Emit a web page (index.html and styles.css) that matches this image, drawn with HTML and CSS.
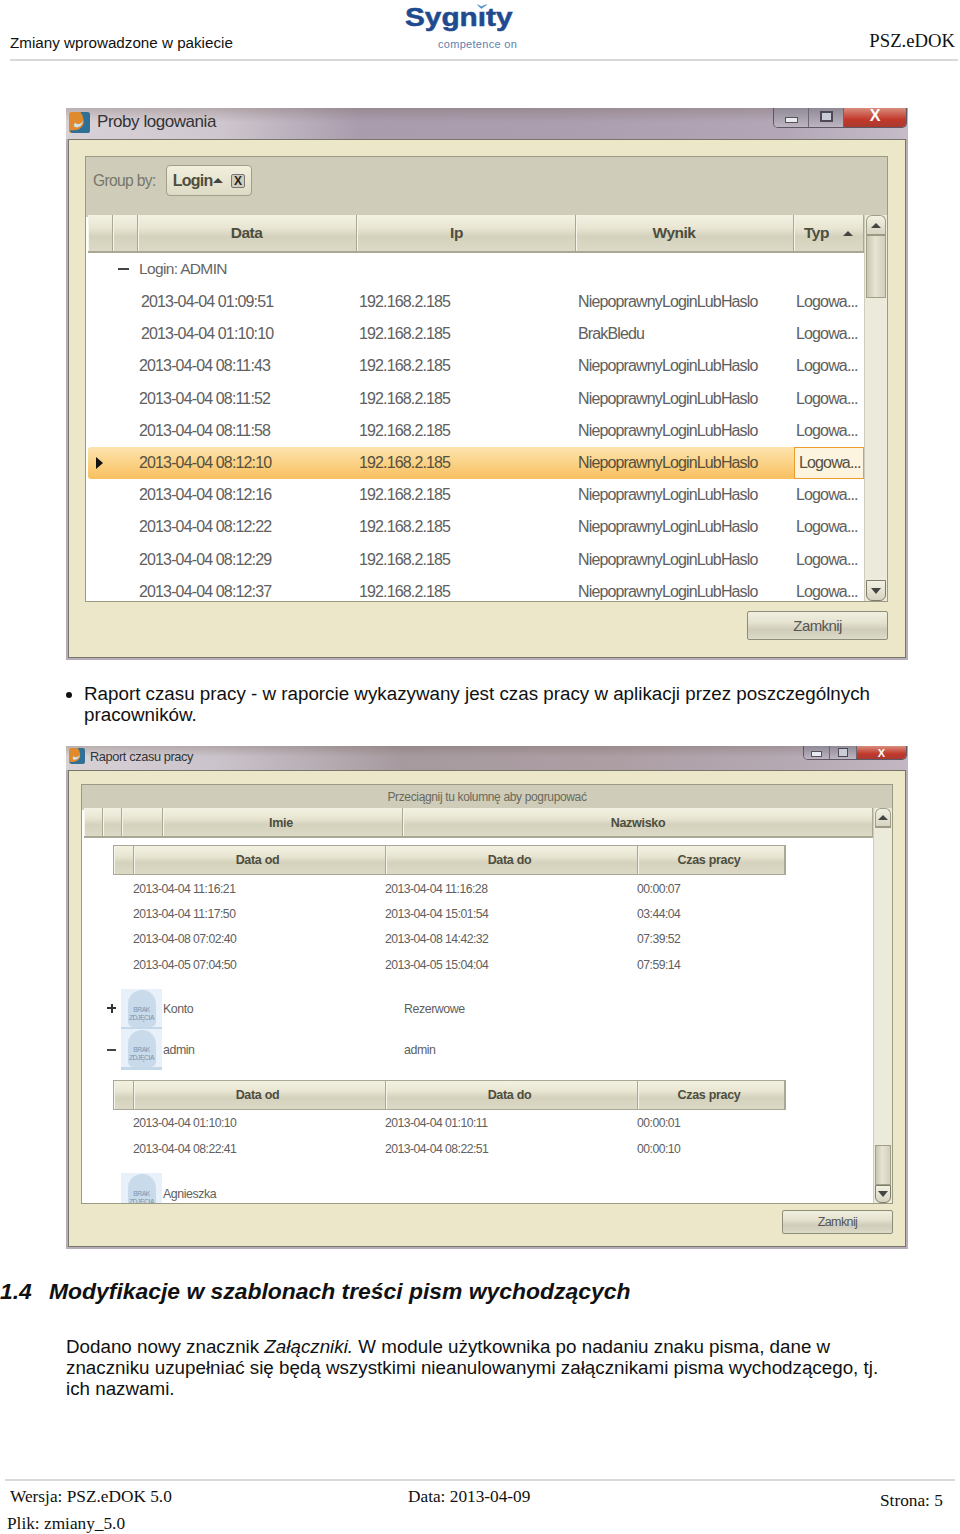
FILE: index.html
```html
<!DOCTYPE html>
<html lang="pl">
  <head>
    <meta charset="UTF-8" />
    <title>Zmiany wprowadzone w pakiecie</title>
    <link rel="stylesheet" href="styles.css">
  </head>
  <body>
    <header class="page-head">
      <span class="head-left">Zmiany wprowadzone w pakiecie</span>
      <div class="logo">
        <span class="logo-name">Sygnity</span>
        <svg class="logo-tick" viewBox="0 0 14 8"><rect width="14" height="8" fill="#fff"/><path d="M1 1l5 5 7-5-7 2.5z" fill="#4f8fc4" stroke="#4f8fc4"/></svg>
        <span class="logo-sub">competence on</span>
      </div>
      <span class="head-right">PSZ.eDOK</span>
    </header>

    <section class="win win-one">
      <div class="titlebar">
        <svg class="app-icon" viewBox="0 0 22 22"><rect width="22" height="22" rx="3" fill="#e08a2e"/><path d="M12 0h7a3 3 0 0 1 3 3v16a3 3 0 0 1-3 3H4c-2 0-3-2-3-3 8 1 12-2 14-6 1-4 0-9-3-13z" fill="#2f7196"/><path d="M6 11c3 3 7 2 9-2-1 6-6 9-10 6z" fill="#cfe2ee"/></svg>
        <span class="win-title">Proby logowania</span>
        <div class="win-btns">
          <span class="wb"><i class="wb-min"></i></span>
          <span class="wb"><i class="wb-max"></i></span>
          <span class="wb wb-close">X</span>
        </div>
      </div>
      <div class="win-body">
        <div class="panel">
          <div class="groupby">
            <span class="groupby-label">Group by:</span>
            <span class="chip">Login<i class="tri-up"></i><b class="chip-x">X</b></span>
          </div>
          <div class="grid-wrap">
            <div class="grid-main">
              <div class="hdr cols-one">
                <span></span><span></span><span>Data</span><span class="hdr-ip">Ip</span><span class="hdr-wynik">Wynik</span>
                <span class="hdr-typ">Typ<i class="tri-up"></i></span>
              </div>
              <div class="group-row"><i class="minus"></i>Login: ADMIN</div>
              <div class="row shift"><span>2013-04-04 01:09:51</span><span>192.168.2.185</span><span>NiepoprawnyLoginLubHaslo</span><span>Logowa...</span></div>
              <div class="row shift"><span>2013-04-04 01:10:10</span><span>192.168.2.185</span><span>BrakBledu</span><span>Logowa...</span></div>
              <div class="row"><span>2013-04-04 08:11:43</span><span>192.168.2.185</span><span>NiepoprawnyLoginLubHaslo</span><span>Logowa...</span></div>
              <div class="row"><span>2013-04-04 08:11:52</span><span>192.168.2.185</span><span>NiepoprawnyLoginLubHaslo</span><span>Logowa...</span></div>
              <div class="row"><span>2013-04-04 08:11:58</span><span>192.168.2.185</span><span>NiepoprawnyLoginLubHaslo</span><span>Logowa...</span></div>
              <div class="row selected"><i class="tri-right"></i><span>2013-04-04 08:12:10</span><span>192.168.2.185</span><span>NiepoprawnyLoginLubHaslo</span><span class="cell-focus">Logowa...</span></div>
              <div class="row"><span>2013-04-04 08:12:16</span><span>192.168.2.185</span><span>NiepoprawnyLoginLubHaslo</span><span>Logowa...</span></div>
              <div class="row"><span>2013-04-04 08:12:22</span><span>192.168.2.185</span><span>NiepoprawnyLoginLubHaslo</span><span>Logowa...</span></div>
              <div class="row"><span>2013-04-04 08:12:29</span><span>192.168.2.185</span><span>NiepoprawnyLoginLubHaslo</span><span>Logowa...</span></div>
              <div class="row"><span>2013-04-04 08:12:37</span><span>192.168.2.185</span><span>NiepoprawnyLoginLubHaslo</span><span>Logowa...</span></div>
            </div>
            <div class="scroll scroll-one">
              <span class="sb-btn sb-up"><i class="tri-up"></i></span>
              <span class="sb-thumb"></span>
              <span class="sb-btn sb-down"><i class="tri-down"></i></span>
            </div>
          </div>
        </div>
        <div class="win-foot"><span class="btn">Zamknij</span></div>
      </div>
    </section>

    <ul class="bullets">
      <li>Raport czasu pracy - w raporcie wykazywany jest czas pracy w aplikacji przez poszczególnych pracowników.</li>
    </ul>

    <section class="win win-two">
      <div class="titlebar">
        <svg class="app-icon" viewBox="0 0 22 22"><rect width="22" height="22" rx="3" fill="#e08a2e"/><path d="M12 0h7a3 3 0 0 1 3 3v16a3 3 0 0 1-3 3H4c-2 0-3-2-3-3 8 1 12-2 14-6 1-4 0-9-3-13z" fill="#2f7196"/><path d="M6 11c3 3 7 2 9-2-1 6-6 9-10 6z" fill="#cfe2ee"/></svg>
        <span class="win-title">Raport czasu pracy</span>
        <div class="win-btns">
          <span class="wb"><i class="wb-min"></i></span>
          <span class="wb"><i class="wb-max"></i></span>
          <span class="wb wb-close">X</span>
        </div>
      </div>
      <div class="win-body">
        <div class="panel">
          <div class="drag-hint">Przeciągnij tu kolumnę aby pogrupować</div>
          <div class="grid-wrap">
            <div class="grid-main">
              <div class="hdr cols-two">
                <span></span><span></span><span></span><span>Imie</span><span>Nazwisko</span>
              </div>
              <div class="sub">
                <div class="hdr cols-sub"><span></span><span>Data od</span><span>Data do</span><span>Czas pracy</span></div>
                <div class="sub-row"><span>2013-04-04 11:16:21</span><span>2013-04-04 11:16:28</span><span>00:00:07</span></div>
                <div class="sub-row"><span>2013-04-04 11:17:50</span><span>2013-04-04 15:01:54</span><span>03:44:04</span></div>
                <div class="sub-row"><span>2013-04-08 07:02:40</span><span>2013-04-08 14:42:32</span><span>07:39:52</span></div>
                <div class="sub-row"><span>2013-04-05 07:04:50</span><span>2013-04-05 15:04:04</span><span>07:59:14</span></div>
              </div>
              <div class="person first">
                <i class="plus"></i>
                <div class="avatar"><span>BRAK<br>ZDJĘCIA</span></div>
                <span>Konto</span><span>Rezerwowe</span>
              </div>
              <div class="person">
                <i class="minus"></i>
                <div class="avatar"><span>BRAK<br>ZDJĘCIA</span></div>
                <span>admin</span><span>admin</span>
              </div>
              <div class="sub sub-two">
                <div class="hdr cols-sub"><span></span><span>Data od</span><span>Data do</span><span>Czas pracy</span></div>
                <div class="sub-row"><span>2013-04-04 01:10:10</span><span>2013-04-04 01:10:11</span><span>00:00:01</span></div>
                <div class="sub-row"><span>2013-04-04 08:22:41</span><span>2013-04-04 08:22:51</span><span>00:00:10</span></div>
              </div>
              <div class="person last">
                <i class="plus"></i>
                <div class="avatar"><span>BRAK<br>ZDJĘCIA</span></div>
                <span>Agnieszka</span><span></span>
              </div>
            </div>
            <div class="scroll scroll-two">
              <span class="sb-btn sb-up"><i class="tri-up"></i></span>
              <span class="sb-thumb"></span>
              <span class="sb-btn sb-down"><i class="tri-down"></i></span>
            </div>
          </div>
        </div>
        <div class="win-foot"><span class="btn">Zamknij</span></div>
      </div>
    </section>

    <h2 class="sec-title"><span class="sec-num">1.4</span>Modyfikacje w szablonach treści pism wychodzących</h2>
    <p class="sec-text">Dodano nowy znacznik <em>Załączniki.</em> W module użytkownika po nadaniu znaku pisma, dane w znaczniku uzupełniać się będą wszystkimi nieanulowanymi załącznikami pisma wychodzącego, tj. ich nazwami.</p>

    <footer class="page-foot">
      <div class="foot-line">
        <span class="foot-ver">Wersja: PSZ.eDOK 5.0</span>
        <span>Data: 2013-04-09</span>
        <span class="foot-page">Strona: 5</span>
      </div>
      <div class="foot-file">Plik: zmiany_5.0</div>
    </footer>
  </body>
</html>
```
FILE: styles.css
```css
* {
  box-sizing: border-box;
}
html,
body {
  margin: 0;
  background: #fff;
}
body {
  width: 960px;
  height: 1534px;
  overflow: hidden;
  font-family: "Liberation Sans", Arial, sans-serif;
  color: #111;
}
i {
  display: block;
}

/* page header */
.page-head {
  display: grid;
  grid-template-columns: 395px 1fr auto;
  align-items: end;
  height: 61px;
  margin-left: 10px;
  margin-right: 2px;
  padding: 0 3px 8px 0;
  border-bottom: 2px solid #d9d9d9;
}
.head-left {
  font-size: 15.2px;
  line-height: 17px;
}
.head-right {
  font-family: "Liberation Serif", serif;
  font-size: 18.7px;
  line-height: 20px;
}
.logo {
  position: relative;
  display: flex;
  flex-direction: column;
  margin-bottom: 1px;
}
.logo-name {
  font-size: 25px;
  line-height: 26px;
  font-weight: bold;
  -webkit-text-stroke: 0.5px #1f4a8f;
  color: #1f4a8f;
  transform: scaleX(1.19);
  transform-origin: left;
}
.logo-tick {
  position: absolute;
  left: 71px;
  top: 0;
  width: 12px;
  height: 6px;
}
.logo-sub {
  margin-left: 33px;
  margin-top: 9px;
  font-size: 11px;
  line-height: 11px;
  letter-spacing: 0.3px;
  color: #5f7fae;
}

/* window chrome */
.win {
  display: flex;
  flex-direction: column;
  width: 842px;
  margin-left: 66px;
  padding: 0 2px 2px;
  background: #b8aeba;
  color: #555;
}
.win-one {
  height: 552px;
  margin-top: 47px;
}
.win-two {
  height: 503px;
}
.titlebar {
  display: flex;
  align-items: center;
  flex: none;
  height: 31px;
  margin: 0 -2px;
  padding-left: 3px;
  padding-bottom: 3px;
  background:
    linear-gradient(rgba(110, 90, 80, 0.28), rgba(110, 90, 80, 0) 45%),
    linear-gradient(90deg, #d8d2d8 0, #cfc7cf 18%, #a99cad 35%, #ab9eae 60%, #b3a7b7 85%, #c5bcc8 100%);
}
.win-two .titlebar {
  height: 24px;
  padding-bottom: 4px;
  background:
    linear-gradient(rgba(110, 90, 80, 0.28), rgba(110, 90, 80, 0) 45%),
    linear-gradient(90deg, #d8d2d6 0, #cbc3cb 18%, #a69a9f 40%, #ad9ea4 65%, #b4a8b2 85%, #c2b7c2 100%);
}
.app-icon {
  width: 21px;
  height: 21px;
  flex: none;
}
.win-two .app-icon {
  width: 16px;
  height: 16px;
}
.win-title {
  margin-left: 7px;
  font-size: 17px;
  letter-spacing: -0.45px;
  color: #333;
}
.win-two .win-title {
  margin-left: 5px;
  font-size: 12.8px;
  letter-spacing: -0.4px;
}
.win-btns {
  display: flex;
  align-self: flex-start;
  margin-left: auto;
  margin-right: 1px;
  height: 20px;
  border: 1px solid #5f5864;
  border-top: none;
  border-radius: 0 0 5px 5px;
  overflow: hidden;
}
.wb {
  display: flex;
  align-items: center;
  justify-content: center;
  width: 35px;
  background: linear-gradient(#8f8a96, #bdb5c1);
  border-right: 1px solid #6d6572;
}
.wb-close {
  width: 62px;
  border: none;
  background: linear-gradient(#d98d7c, #c2392c 60%, #a83a30);
  color: #fff;
  font-weight: bold;
  font-size: 16px;
  line-height: 14px;
  padding-bottom: 4px;
}
.wb-min {
  width: 13px;
  height: 6px;
  border: 1px solid #555;
  background: #e9ebf2;
  margin-top: 5px;
}
.wb-max {
  width: 13px;
  height: 11px;
  margin-bottom: 3px;
  border: 2px solid #4e4a55;
  background: #c9cbd6;
}
.win-two .win-btns {
  width: 104px;
  height: 14px;
}
.win-two .wb {
  width: 27px;
}
.win-two .wb-close {
  width: 50px;
  font-size: 11px;
  line-height: 12px;
  padding-bottom: 0;
}
.win-two .wb-min {
  width: 11px;
  height: 6px;
  margin-top: 2px;
}
.win-two .wb-max {
  width: 10px;
  height: 9px;
  margin-bottom: 0;
  border-width: 1px;
}
.win-body {
  flex: 1;
  display: flex;
  flex-direction: column;
  min-height: 0;
  background: #ece7c9;
  border: 1px solid #77766a;
}
.win-one .win-body {
  padding: 16px 17px 0 16px;
}
.win-two .win-body {
  padding: 13px 12px 0 12px;
}
.panel {
  display: flex;
  flex-direction: column;
  border: 1px solid #9b9a82;
  background: #cfcdb9;
}
.win-one .panel {
  height: 446px;
}
.win-two .panel {
  height: 420px;
}
.groupby {
  display: flex;
  align-items: flex-start;
  flex: none;
  height: 58px;
  padding: 8px 0 0 7px;
  gap: 10px;
}
.groupby-label {
  font-size: 15.6px;
  line-height: 31px;
  letter-spacing: -0.65px;
  color: #77766a;
}
.chip {
  display: flex;
  align-items: center;
  width: 86px;
  height: 31px;
  padding-left: 6px;
  border: 1px solid #a09f88;
  border-radius: 4px;
  background: linear-gradient(#f2efdd, #dddbc5);
  font-size: 16px;
  font-weight: bold;
  letter-spacing: -0.7px;
  color: #4e4e3e;
}
.chip-x {
  width: 14px;
  height: 14px;
  margin-left: 8px;
  border: 1px solid #777;
  border-radius: 2px;
  background: #cfcdb9;
  font-size: 12px;
  line-height: 12px;
  text-align: center;
  color: #222;
}
.drag-hint {
  flex: none;
  height: 23px;
  font-size: 12px;
  line-height: 25px;
  letter-spacing: -0.35px;
  text-align: center;
  color: #6a695c;
}
.grid-wrap {
  display: flex;
  flex: 1;
  min-height: 0;
  padding-left: 2px;
  background: linear-gradient(#cfcdb9, #cfcdb9) top / 100% 2px no-repeat, #fff;
}

/* tables */
.grid-main {
  flex: 1;
  min-width: 0;
  overflow: hidden;
}
.hdr {
  display: grid;
  background: linear-gradient(#f3f1e2 0, #e9e6d3 35%, #d4d2bd 60%, #dcdac6 100%);
  border-bottom: 2px solid #a9a894;
  font-size: 15.5px;
  font-weight: bold;
  letter-spacing: -0.5px;
  color: #4e4e3e;
}
.hdr span {
  display: flex;
  align-items: center;
  justify-content: center;
  border-right: 1px solid #a9a894;
  border-left: 1px solid #f6f5ea;
}
.cols-one {
  grid-template-columns: 25px 25px 219px 219px 218px 1fr;
  height: 38px;
}
.cols-one span:nth-child(3) {
  padding-right: 2px;
}
.hdr .hdr-ip {
  padding-right: 20px;
}
.hdr .hdr-wynik {
  padding-right: 22px;
}
.hdr .hdr-typ {
  justify-content: flex-start;
  padding-left: 9px;
  gap: 14px;
}
.cols-two {
  grid-template-columns: 19px 19px 41px 240px 1fr;
  height: 30px;
  font-size: 12.5px;
  letter-spacing: -0.3px;
}
.cols-two span {
  padding-top: 1px;
}
.cols-two span:nth-child(4) {
  padding-right: 4px;
}
.cols-sub {
  grid-template-columns: 20px 252px 252px 1fr;
  height: 30px;
  border: 1px solid #a9a894;
  font-size: 12.5px;
  letter-spacing: -0.3px;
}
.cols-sub span {
  padding-right: 5px;
}
.group-row {
  display: flex;
  align-items: center;
  height: 33px;
  padding: 0 0 2px 30px;
  gap: 10px;
  font-size: 15.5px;
  letter-spacing: -0.65px;
  color: #666;
}
.minus {
  width: 11px;
  height: 2px;
  background: #444;
}
.row {
  position: relative;
  display: grid;
  grid-template-columns: 220px 219px 218px 1fr;
  align-items: center;
  height: 32.2px;
  padding-left: 51px;
  font-size: 16px;
  letter-spacing: -0.86px;
  white-space: nowrap;
  color: #606060;
}
.row.shift span:first-child {
  padding-left: 2px;
}
.selected {
  background: linear-gradient(#fde3ae 0, #fbd48a 45%, #f8bf5e 100%);
  border-radius: 3px;
  color: #55503f;
}
.tri-right {
  position: absolute;
  left: 8px;
  top: 10px;
  border-left: 7px solid #111;
  border-top: 6px solid transparent;
  border-bottom: 6px solid transparent;
}
.cell-focus {
  align-self: stretch;
  display: flex;
  align-items: center;
  margin-left: -2px;
  padding-left: 4px;
  background: #fdf4df;
  border: 1px solid #ec9e2c;
}
.tri-up {
  width: 0;
  height: 0;
  border-left: 5px solid transparent;
  border-right: 5px solid transparent;
  border-bottom: 5px solid #444;
}
.tri-down {
  width: 0;
  height: 0;
  border-left: 5px solid transparent;
  border-right: 5px solid transparent;
  border-top: 6px solid #444;
}

/* scrollbars */
.scroll {
  display: flex;
  flex-direction: column;
  flex: none;
  width: 23px;
  padding: 0 1px;
  background: #eceadb;
  border-left: 1px solid #cfcdb9;
}
.sb-btn {
  display: flex;
  align-items: center;
  justify-content: center;
  flex: none;
  height: 21px;
  border: 1px solid #a09f88;
  background: linear-gradient(#f3f1e2, #d6d4c0);
}
.sb-up {
  border-radius: 6px 6px 0 0;
  border-bottom: 2px solid #9b9a82;
}
.sb-down {
  margin-top: auto;
  border-radius: 0 0 6px 6px;
  border-color: #7f7e6c;
}
.sb-thumb {
  height: 62px;
  background: linear-gradient(90deg, #c9c7b2, #e6e4d2 45%, #d2d0bc);
  border: 1px solid #a09f88;
  border-top: none;
}
.scroll-two {
  width: 19px;
}
.scroll-two .sb-btn {
  height: 18px;
}
.scroll-two .sb-up {
  height: 20px;
}
.scroll-two .sb-thumb {
  margin-top: auto;
  height: 40px;
  border-top: 1px solid #a09f88;
}
.scroll-two .sb-down {
  margin-top: 0;
}

/* second window rows */
.sub {
  margin: 7px 0 0 29px;
  width: 673px;
}
.sub-two {
  margin-top: 10px;
}
.sub-row {
  display: grid;
  grid-template-columns: 252px 252px 1fr;
  align-items: center;
  height: 25.4px;
  padding-left: 20px;
  font-size: 12.2px;
  letter-spacing: -0.52px;
  white-space: nowrap;
  color: #606060;
}
.sub-row:nth-child(2) {
  margin-top: 1px;
}
.person {
  position: relative;
  display: grid;
  grid-template-columns: 42px 241px 1fr;
  align-items: center;
  height: 40.5px;
  margin-left: 37px;
  font-size: 12.4px;
  letter-spacing: -0.45px;
  color: #5f5f5f;
}
.person.first {
  margin-top: 11px;
}
.person.last {
  margin-top: 12px;
  height: 30px;
  overflow: hidden;
}
.person .plus,
.person .minus {
  position: absolute;
  left: -14px;
  top: 50%;
}
.plus {
  width: 9px;
  height: 9px;
  margin-top: -5px;
  background:
    linear-gradient(#333, #333) center / 100% 2px no-repeat,
    linear-gradient(#333, #333) center / 2px 100% no-repeat;
}
.person .minus {
  width: 9px;
}
.avatar {
  position: relative;
  display: flex;
  justify-content: center;
  width: 41px;
  height: 41px;
  padding-top: 1px;
  background: #e8f1f9;
  border-bottom: 3px solid #c5d8e9;
}
.avatar::before {
  content: "";
  width: 28px;
  height: 37px;
  border-radius: 14px 14px 5px 5px;
  background: #c9dbeb;
}
.avatar span {
  position: absolute;
  left: 0;
  right: 0;
  top: 17px;
  font-size: 6.8px;
  line-height: 8px;
  text-align: center;
  color: #7d93ab;
}
.person.last .avatar {
  align-self: start;
}

/* window footer */
.win-foot {
  display: flex;
  justify-content: flex-end;
}
.win-one .win-foot {
  margin-top: 9px;
}
.win-two .win-foot {
  margin-top: 6px;
}
.btn {
  display: flex;
  align-items: center;
  justify-content: center;
  border: 1px solid #8e8d78;
  border-radius: 2px;
  background: linear-gradient(#f1efe0 0, #e4e2cf 40%, #cfcdb9 65%, #dcdac8 100%);
  color: #555;
  letter-spacing: -0.6px;
}
.win-one .btn {
  width: 141px;
  height: 29px;
  font-size: 15px;
}
.win-two .btn {
  width: 111px;
  height: 24px;
  font-size: 12.5px;
}

/* document text */
.bullets {
  height: 63px;
  width: 900px;
  margin: 23px 0 0 0;
  padding: 0 0 0 84px;
  font-size: 18.8px;
  line-height: 21px;
}
.sec-title {
  display: flex;
  margin: 29px 0 0 0;
  font-size: 22.9px;
  line-height: 26px;
  font-style: italic;
  font-weight: bold;
  white-space: nowrap;
}
.sec-num {
  width: 49px;
}
.sec-text {
  width: 830px;
  margin: 32px 0 0 66px;
  font-size: 18.8px;
  line-height: 21px;
}
.page-foot {
  margin: 80px 5px 0 5px;
  padding-top: 6px;
  border-top: 2px solid #d9d9d9;
  font-family: "Liberation Serif", serif;
  font-size: 17.3px;
  line-height: 20px;
}
.foot-line {
  display: grid;
  grid-template-columns: 403px 472px auto;
}
.foot-ver {
  padding-left: 5px;
}
.foot-page {
  margin-top: 4px;
}
.foot-file {
  margin: 3px 0 0 2px;
}
```
